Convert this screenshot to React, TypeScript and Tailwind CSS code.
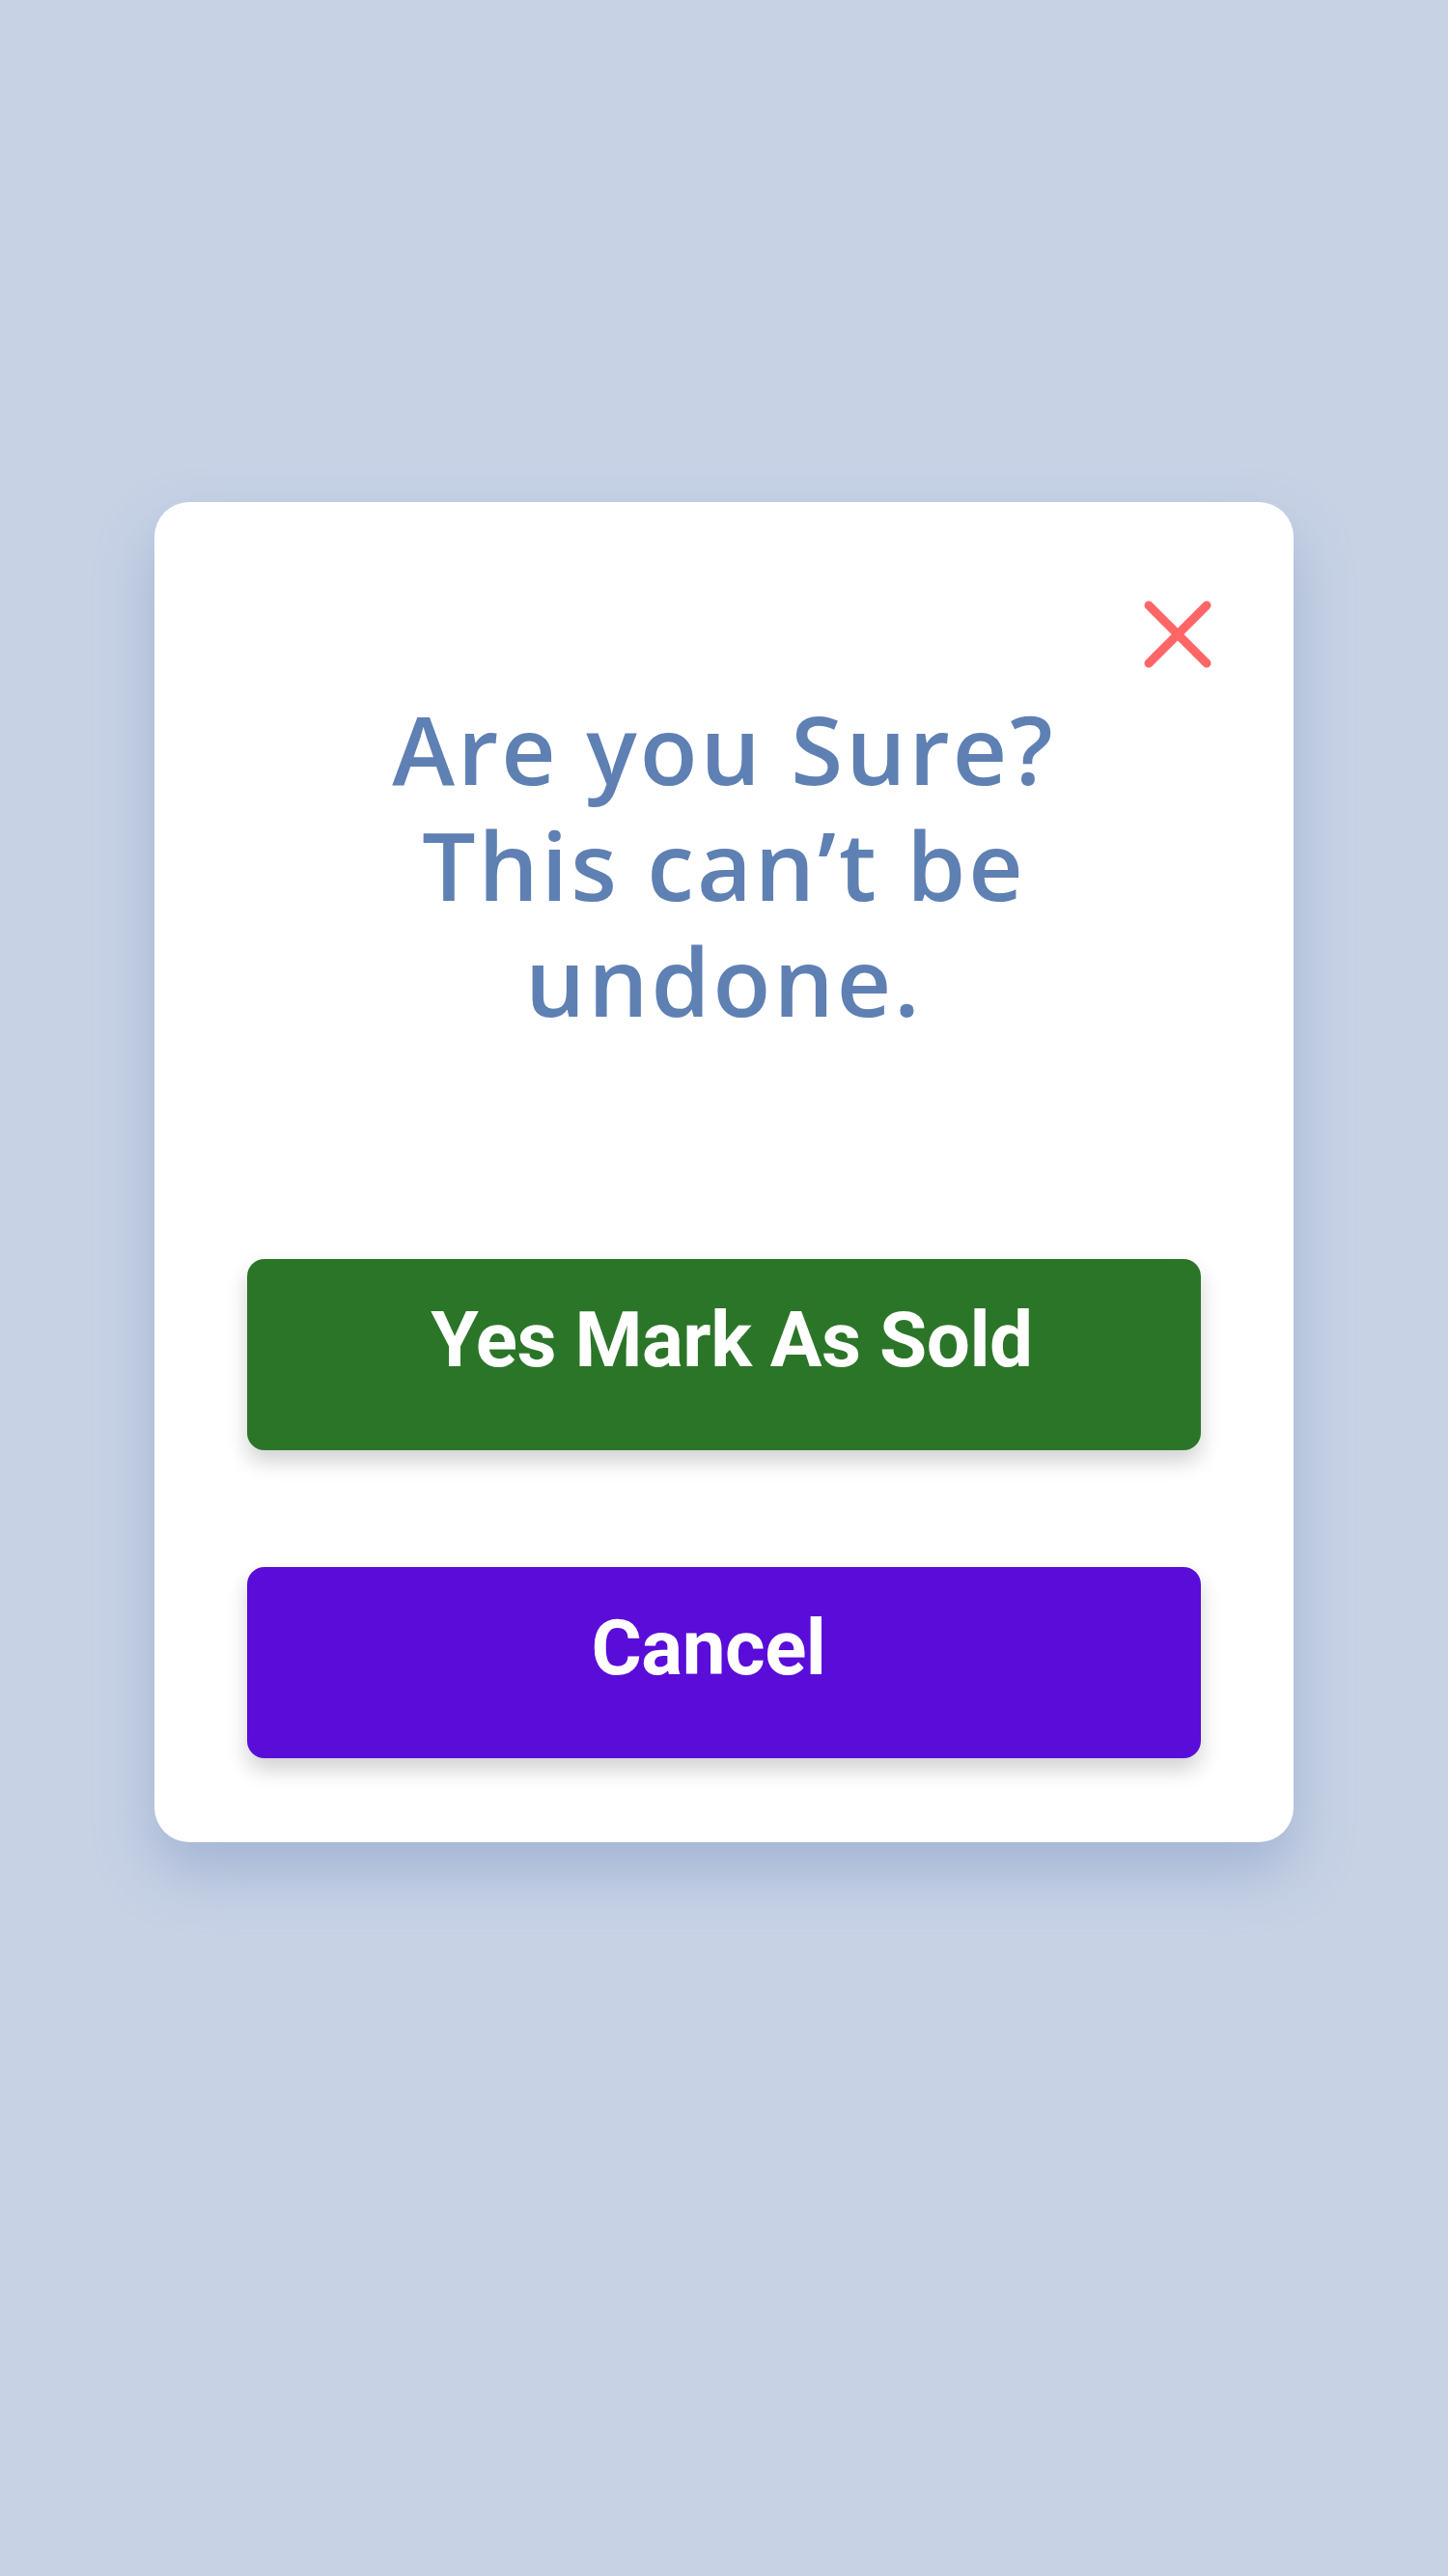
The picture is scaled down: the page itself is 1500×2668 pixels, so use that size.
export default function App() {
  return (
    <div className="min-h-[2668px] w-full bg-[#c7d2e5] pt-[520px] flex justify-center">
      <div className="w-[1180px] h-[1388px] bg-white rounded-[36px] shadow-[0_30px_60px_rgba(120,145,190,0.45)] flex flex-col">
        <div className="flex justify-end pt-[102px] pr-[85px]">
          <button type="button" aria-label="Close" className="w-[70px] h-[70px]">
            <svg viewBox="0 0 70 70" width="70" height="70">
              <path
                d="M5 5 L65 65 M65 5 L5 65"
                stroke="#ff6666"
                strokeWidth="9"
                strokeLinecap="round"
              />
            </svg>
          </button>
        </div>

        <h1 className="mt-[23px] text-center text-[#5f80b3] text-[98px] leading-[120px] tracking-[3px] font-['Open_Sans',sans-serif] font-semibold">
          Are you Sure?
          <br />
          This can’t be
          <br />
          undone.
        </h1>

        <div className="flex flex-col px-[96px] mt-[229px] gap-[121px]">
          <button
            type="button"
            className="h-[198px] rounded-[18px] bg-[#2b7529] text-white shadow-[0_12px_22px_rgba(0,0,0,0.18)] font-['Roboto',sans-serif] font-bold text-[80px] leading-none tracking-[-0.5px] pb-[30px] pl-[16px]"
          >
            Yes Mark As Sold
          </button>
          <button
            type="button"
            className="h-[198px] rounded-[18px] bg-[#5a0cd9] text-white shadow-[0_12px_22px_rgba(0,0,0,0.18)] font-['Roboto',sans-serif] font-bold text-[80px] leading-none tracking-[-0.5px] pb-[30px] pr-[32px]"
          >
            Cancel
          </button>
        </div>
      </div>
    </div>
  );
}
